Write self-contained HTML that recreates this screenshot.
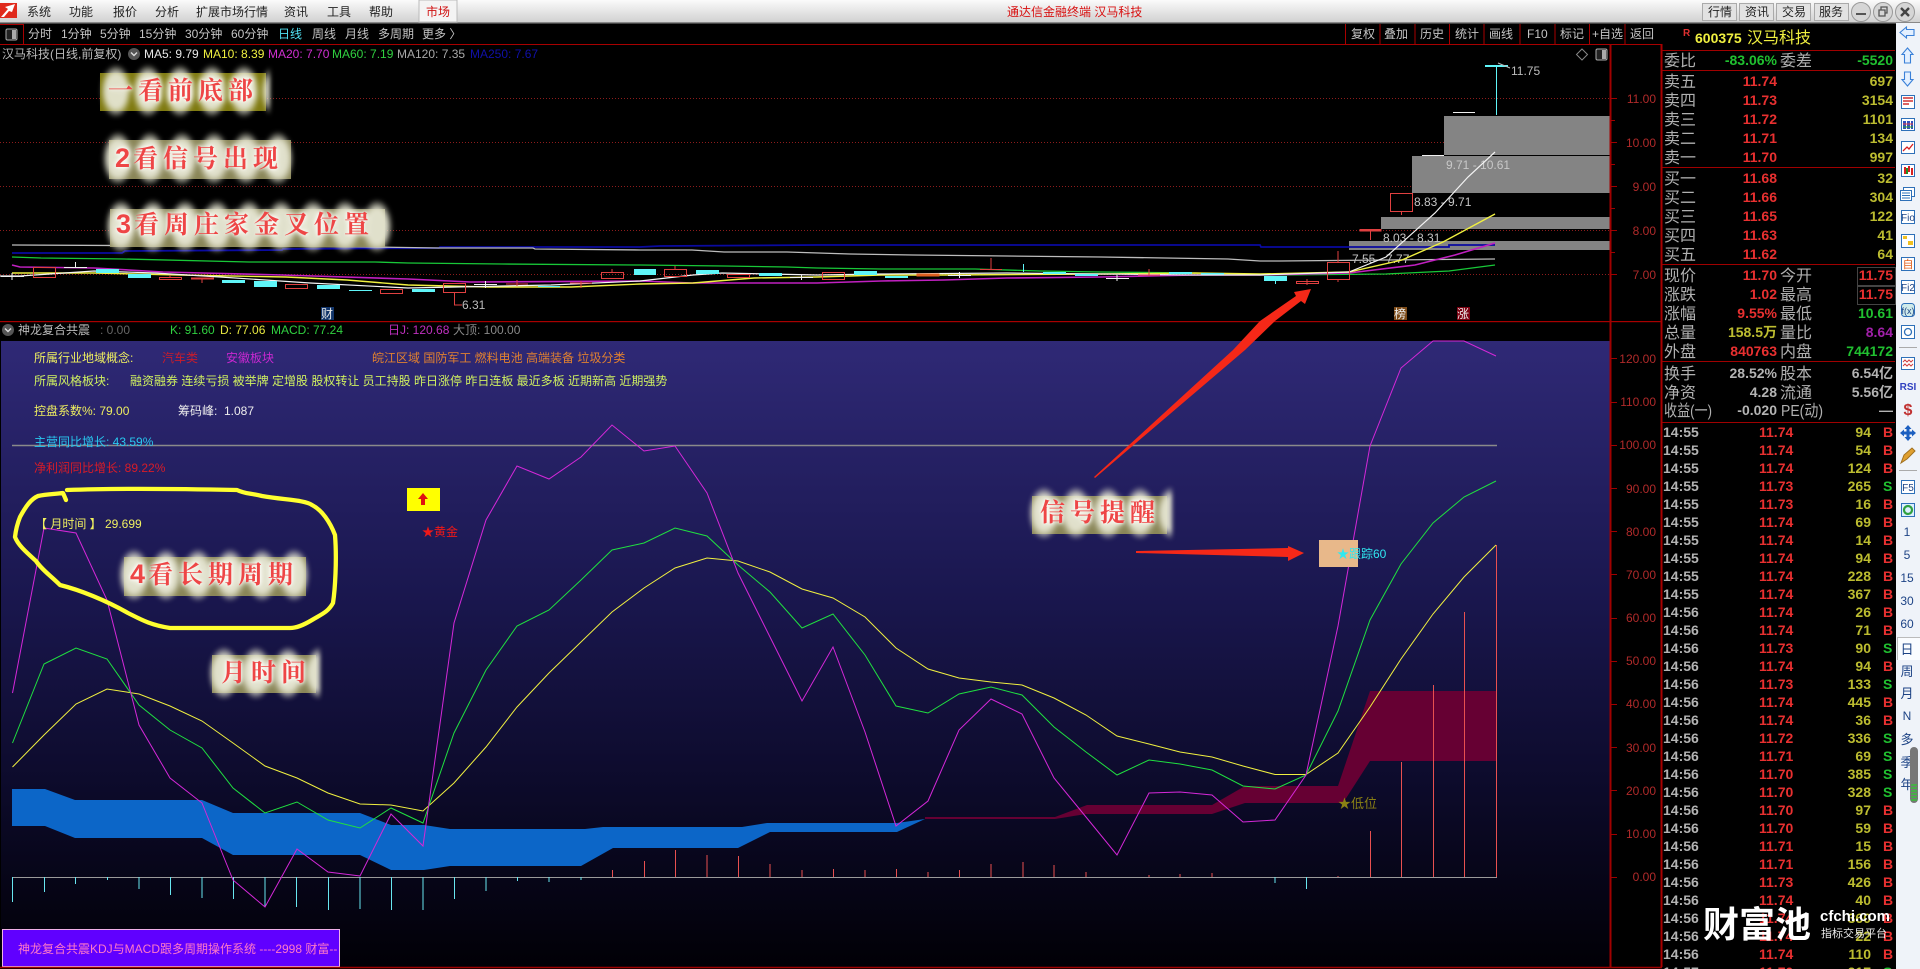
<!DOCTYPE html>
<html lang="zh"><head><meta charset="utf-8"><title>通达信金融终端 汉马科技</title>
<style>
html,body{margin:0;padding:0;background:#000;width:1920px;height:969px;overflow:hidden}
svg{position:absolute;left:0;top:0;display:block}
svg text{font-family:"Liberation Sans","Noto Sans CJK SC",sans-serif;font-size:12px;white-space:pre}
.m{fill:#222}.tb{fill:#c4c4c4}.b{font-size:14px!important;font-weight:bold}
.l{font-size:16px!important;fill:#b0b0b0}.r{fill:#e83030}.y{fill:#bcbc30}.g{fill:#20c030}.w{fill:#b4b4b4}
.e{text-anchor:end}.ax{fill:#b02a2a;text-anchor:end}.s{fill:#1d4385;text-anchor:middle}
.bx{position:absolute;background:#8a8658}
.hl{position:absolute;background:radial-gradient(ellipse closest-side,rgba(228,228,208,.96) 62%,rgba(228,228,208,0) 100%) 0 0/32px 100% repeat-x;filter:blur(2px)}
.gl{position:absolute;height:30px;line-height:30px;white-space:nowrap;font-family:"Noto Serif CJK SC","Liberation Serif",serif;font-size:25px;font-weight:700;letter-spacing:5px;color:#ee4646;text-shadow:0 0 3px #fff,0 0 6px #fff,0 0 9px #fffff0}
.gl span{font-family:"Liberation Sans",sans-serif;font-size:27px;letter-spacing:3px}
</style></head><body>
<svg width="1920" height="969" viewBox="0 0 1920 969" xmlns="http://www.w3.org/2000/svg">
<defs>
<linearGradient id="tg" x1="0" y1="0" x2="0" y2="1"><stop offset="0" stop-color="#fbfbfb"/><stop offset="1" stop-color="#cfcfcf"/></linearGradient>
<linearGradient id="pg" x1="0" y1="0" x2="0" y2="1"><stop offset="0" stop-color="#2f2976"/><stop offset=".4" stop-color="#1a174f"/><stop offset=".7" stop-color="#0d0b2c"/><stop offset="1" stop-color="#010006"/></linearGradient>
</defs>
<rect width="1920" height="969" fill="#000"/>
<!-- title bar -->
<rect width="1920" height="23" fill="url(#tg)"/><rect y="22" width="1920" height="1.5" fill="#888"/>
<rect x="0" y="3" width="17" height="15" fill="#e02a1c"/><path d="M1 17 L8 9 L5 7 L15 4 L12 12 L9 11 L4 17Z" fill="#fff"/>
<g class="m">
<text x="27" y="16" class="m">系统</text><text x="69" y="16" class="m">功能</text><text x="113" y="16" class="m">报价</text><text x="155" y="16" class="m">分析</text><text x="196" y="16" class="m">扩展市场行情</text><text x="284" y="16" class="m">资讯</text><text x="327" y="16" class="m">工具</text><text x="369" y="16" class="m">帮助</text>
</g>
<rect x="419" y="0" width="38" height="22" fill="#f4f4f4" stroke="#bbb"/><text x="426" y="16" fill="#d01010">市场</text>
<text x="1007" y="16" fill="#d81010">通达信金融终端 汉马科技</text>
<g fill="#e2e2e2" stroke="#aaa"><rect x="1702.5" y="3.5" width="34" height="17"/><rect x="1739.5" y="3.5" width="34" height="17"/><rect x="1776.5" y="3.5" width="34" height="17"/><rect x="1814.5" y="3.5" width="34" height="17"/></g>
<text x="1708" y="16" class="m">行情</text><text x="1745" y="16" class="m">资讯</text><text x="1782" y="16" class="m">交易</text><text x="1819" y="16" class="m">服务</text>
<g fill="#d6d6d6" stroke="#999"><circle cx="1861" cy="12" r="9.5"/><circle cx="1883" cy="12" r="9.5"/><circle cx="1905" cy="12" r="9.5"/></g>
<path d="M1856 14H1866" stroke="#555" stroke-width="2"/><path d="M1879 10h6v6h-6zM1881 10V7h6v6h-2" fill="none" stroke="#555" stroke-width="1.3"/><path d="M1901 8L1909 16M1909 8L1901 16" stroke="#444" stroke-width="2.4"/>
<!-- toolbar -->
<rect x="0" y="44" width="1662" height="1" fill="#a80000"/>
<path d="M0 24.5H23.5V44" fill="none" stroke="#a80000"/>
<rect x="6" y="29" width="11" height="11" rx="1.5" fill="#222" stroke="#aaa"/><rect x="12" y="30" width="4" height="9" fill="#aaa"/>
<g class="tb">
<text x="28" y="38" class="tb">分时</text><text x="61" y="38" class="tb">1分钟</text><text x="100" y="38" class="tb">5分钟</text><text x="139" y="38" class="tb">15分钟</text><text x="185" y="38" class="tb">30分钟</text><text x="231" y="38" class="tb">60分钟</text><text x="278" y="38" fill="#50e0f0">日线</text><text x="312" y="38" class="tb">周线</text><text x="345" y="38" class="tb">月线</text><text x="378" y="38" class="tb">多周期</text><text x="422" y="38" class="tb">更多 〉</text>
<text x="1351" y="38" class="tb">复权</text><text x="1384" y="38" class="tb">叠加</text><text x="1420" y="38" class="tb">历史</text><text x="1455" y="38" class="tb">统计</text><text x="1489" y="38" class="tb">画线</text><text x="1527" y="38" class="tb">F10</text><text x="1560" y="38" class="tb">标记</text><text x="1592" y="38" class="tb">+自选</text><text x="1630" y="38" class="tb">返回</text>
</g>
<path d="M1345.5 24V44M1380 24V44M1415 24V44M1449.5 24V44M1484 24V44M1520 24V44M1555 24V44M1589.5 24V44M1625 24V44" stroke="#a80000"/>
<!-- info row -->
<text x="2" y="58" fill="#bbb">汉马科技(日线,前复权)</text>
<circle cx="134" cy="54" r="6" fill="#555"/><path d="M131 52.5l3 3 3-3" fill="none" stroke="#ddd" stroke-width="1.4"/>
<text x="144" y="58" fill="#e8e8e8">MA5: 9.79</text><text x="203" y="58" fill="#f0f040">MA10: 8.39</text><text x="268" y="58" fill="#d030d0">MA20: 7.70</text><text x="332" y="58" fill="#30d040">MA60: 7.19</text><text x="397" y="58" fill="#a8a8a8">MA120: 7.35</text><text x="470" y="58" fill="#1010a8">MA250: 7.67</text>
<path d="M1582 49l5.500 5.500-5.500 5.500-5.500-5.500z" fill="none" stroke="#888"/><rect x="1596" y="49" width="11" height="11" rx="1.500" fill="#222" stroke="#aaa"/><rect x="1602" y="50" width="4" height="9" fill="#aaa"/>
<!-- main chart grid -->
<g stroke="#8e1c1c" stroke-dasharray="1 2"><path d="M0 98.500H1610M0 142.500H1610M0 186.500H1610M0 230.500H1610M0 274.500H1610"/></g>
<!-- gray zones -->
<g fill="#848484"><rect x="1444" y="116" width="166" height="39"/><rect x="1412" y="156" width="198" height="37"/><rect x="1381" y="217" width="229" height="12"/><rect x="1349" y="241" width="261" height="9"/></g>
<rect x="1422" y="155" width="22" height="1" fill="#fff"/>
<text x="1446" y="169" fill="#c8c8c8">9.71 - 10.61</text><text x="1414" y="206" fill="#c4c4c4">8.83 - 9.71</text><text x="1383" y="242" fill="#c4c4c4">8.03 - 8.31</text><text x="1352" y="263" fill="#c4c4c4">7.55 - 7.77</text>
<!-- MA lines -->
<g fill="none" stroke-width="1.300">
<polyline stroke="#0a0aa0" stroke-width="1.800" points="12,253 122,253 125,251 282,250 283,249 439,248 440,247 640,247 660,246 817,245 1102,245 1260,245 1261,247 1449,247 1449,245 1495,245"/>
<polyline stroke="#bcbcbc" points="12,245 218,246 375,247 439,248 533,248 535,249 640,250 692,250 724,252 787,252 850,254 913,255 1007,256 1101,257 1165,258 1228,259 1260,261 1280,261 1495,259"/>
<polyline stroke="#18c838" points="12,257 41,258 124,259 249,262 375,262 408,263 502,264 640,265 724,266 787,267 817,268 881,269 975,269 1040,271 1101,272 1195,273 1260,275 1280,275 1386,274 1449,271 1495,265"/>
<polyline stroke="#c020c0" stroke-width="1.600" points="12,265 20,267 94,268 163,272 282,275 408,279 470,282 640,281 692,283 817,283 881,281 944,280 1007,278 1101,277 1195,275 1260,275 1349,273 1415,265 1455,255 1495,243"/>
<polyline stroke="#f0f040" stroke-width="1.400" points="12,273 94,273 180,275 286,277 347,280 408,285 490,287 571,287 640,284 693,283 754,278 817,277 881,275 944,275 1101,274 1195,273 1260,274 1349,272 1402,260 1443,242 1495,214"/>
<polyline stroke="#f4f4f4" stroke-width="1.200" points="0,276 20,276 94,271 155,273 220,277 310,283 408,288 551,285 640,281 693,275 722,273 817,275 881,274 1007,273 1195,275 1260,275 1349,272 1386,257 1435,213 1468,177 1495,152"/>
</g>
<!-- candles -->
<g fill="none" stroke="#e04040">
<rect x="33.500" y="267.500" width="22" height="10"/><rect x="159.500" y="277.500" width="22" height="2"/><rect x="191.500" y="278" width="22" height="1" fill="#e04040"/><path d="M202 279V283M170 275V277"/>
<rect x="285.500" y="284.500" width="22" height="4"/><rect x="380.500" y="289.500" width="22" height="4"/><rect x="443.500" y="283.500" width="22" height="9"/><path d="M454.500 292V305H462"/>
<path d="M506 284H528M517 280V286M570 283H592M581 281V288"/><rect x="601.500" y="272.500" width="22" height="6"/><path d="M612 269V272"/>
<rect x="664.500" y="269.500" width="22" height="7"/><path d="M675 266V270"/><rect x="727.500" y="274.500" width="22" height="3"/><rect x="822.500" y="272.500" width="22" height="7"/>
<rect x="917" y="274" width="22" height="2" fill="#e06020" stroke="#e06020"/><path d="M980 269.500H1002M991 258V270M1149 269V276M1138 275H1160"/>
<rect x="1296.500" y="281.500" width="22" height="2"/><path d="M1307 279V285"/><rect x="1327.500" y="262.500" width="22" height="17"/><path d="M1338 251V262M1338 279V282"/>
<rect x="1360" y="229.500" width="21" height="1.500" fill="#e04040"/><path d="M1370.500 231V240"/><rect x="1390.500" y="193.500" width="22" height="18"/><path d="M1401.500 211V215"/>
</g>
<g fill="#5ff5f8">
<rect x="96" y="269" width="23" height="4"/><rect x="128" y="274" width="23" height="4"/><rect x="222" y="280" width="23" height="3"/><rect x="254" y="281" width="23" height="6"/><rect x="317" y="285" width="23" height="4"/><rect x="349" y="290" width="23" height="1"/><rect x="412" y="289" width="23" height="3"/><rect x="538" y="286" width="22" height="1"/><rect x="634" y="269" width="22" height="6"/><rect x="696" y="270" width="23" height="4"/><rect x="759" y="273" width="23" height="3"/><rect x="854" y="271" width="23" height="4"/><rect x="885" y="276" width="23" height="2"/><rect x="1043" y="272" width="23" height="2"/><rect x="1075" y="274" width="23" height="2"/><rect x="1169" y="272" width="23" height="2"/><rect x="1201" y="273" width="23" height="1.500"/><rect x="1264" y="276" width="23" height="5"/><rect x="1485" y="65" width="23" height="2"/>
<rect x="1275" y="281" width="1" height="3"/><rect x="1496" y="66" width="1" height="49"/><rect x="1023" y="264" width="1" height="8"/>
</g>
<g stroke="#f0f0f0"><path d="M1 276.500H24M12 273V280M64 267.500H87M75.500 262V267M474 284.500H497M485.500 281V288M790 277.500H813M801.500 275V280M948 275.500H971M959.500 272V278M1106 278.500H1129M1117 275V281M1422 155.500H1444M1453 112.500H1475"/></g>
<text x="1511" y="75" fill="#bcbcbc">11.75</text><path d="M1498 63L1510 68" stroke="#bbb"/>
<text x="462" y="309" fill="#bcbcbc">6.31</text>
<rect x="321" y="307" width="13" height="13" fill="#12356a"/><text x="321" y="318" fill="#e8e8e8">财</text>
<rect x="1394" y="307" width="13" height="13" fill="#7d4c1a"/><text x="1394" y="318" fill="#eee">榜</text>
<rect x="1457" y="307" width="13" height="13" fill="#7a0010"/><text x="1457" y="318" fill="#eee">涨</text>
<!-- lower header -->
<rect y="321" width="1662" height="1.200" fill="#a80000"/>
<circle cx="8" cy="330" r="6" fill="#555"/><path d="M5 328.500l3 3 3-3" fill="none" stroke="#ddd" stroke-width="1.400"/>
<text x="18" y="334" fill="#bbb">神龙复合共震</text><text x="100" y="334" fill="#666">: 0.00</text>
<text x="170" y="334" fill="#30d040">K: 91.60</text><text x="220" y="334" fill="#e8e840">D: 77.06</text><text x="271" y="334" fill="#30d040">MACD: 77.24</text><text x="388" y="334" fill="#c030c0">日J: 120.68</text><text x="453" y="334" fill="#888">大顶: 100.00</text>
<!-- lower panel -->
<rect x="1" y="341" width="1609" height="626" fill="url(#pg)"/>
<path d="M12 445.500H1497" stroke="#8a8a8a" stroke-width="1.500"/>
<path d="M12 877.500H1497" stroke="#9a9a9a"/>
<polygon fill="#0c66c8" points="12,789 45,789 75,800 202,800 233,813 360,813 391,825 424,825 450,829 585,829 603,827 742,827 767,823 897,823 925,819 897,832 770,832 738,848 613,848 581,866 450,866 424,870 391,870 360,855 233,855 202,838 75,838 45,826 12,826"/>
<polygon fill="#660033" points="925,817 1055,817 1087,805 1212,805 1245,786 1338,786 1370,691 1496,691 1496,761 1370,761 1343,803 1245,803 1212,814 1086,814 1055,819 925,819"/>
<g fill="none" stroke="#68e6f0"><path d="M12.500 877V902M44.500 877V892M75.500 877V884M107.500 877V880M139 877V889M170.500 877V895M202 877V898M233.500 877V899M265 877V907M296.500 877V907M328.500 877V910M360 877V909M391.500 877V910M423 877V910M454.500 877V899M486 877V891M517.500 877V881M549 877V882M581 877V880M1275 877V883M1306.500 877V889"/></g>
<g fill="none" stroke="#e85050"><path d="M612.500 877V870M644.500 877V861M675.500 877V850M707 877V855M738.500 877V856M770 877V864M802 877V870M833.500 877V869M865 877V870M896.500 877V869M928 877V872M959.500 877V870M991 877V864M1023 877V862M1054 877V865M1086 877V872M1149 877V875M1180 877V874M1212 877V873M1338 877V876M1370.500 877V831M1401.500 877V762M1433.500 877V685M1464.500 877V612M1496.500 877V545"/></g>
<polyline fill="none" stroke="#f0f040" points="12.500,767 44,735 76,704 107,689 139,694 170,706 202,721 233,743 265,766 297,778 328,793 360,804 391,805 423,811 454,783 486,747 517,707 549,673 581,642 612,612 644,588 675,568 707,558 738,561 770,572 802,589 833,598 865,617 896,648 928,669 959,678 991,682 1022,685 1054,698 1086,715 1117,736 1149,744 1180,752 1212,757 1243,766 1275,774.500 1306,774.500 1338,753 1370,707 1401,659 1433,614 1464,577 1496,545"/>
<polyline fill="none" stroke="#20e040" points="12.500,743 44,664 76,648 107,659 139,705 170,730 202,748 233,788 265,813 297,802 328,820 360,828 391,808 423,823 454,733 486,670 517,626 549,610 581,580 612,550 644,543 675,528 707,536 738,565 770,592 802,628 833,614 865,655 896,706 928,713 959,694 991,687 1022,695 1054,727 1086,752 1117,775 1149,760 1180,764 1212,770 1243,786 1275,789 1306,775 1338,711 1370,620 1401,564 1433,523 1464,497 1496,481"/>
<polyline fill="none" stroke="#d428d8" points="12.500,693 44,528 76,533 107,600 139,725 170,778 202,803 233,880 265,907 297,849 328,872 360,876 391,814 423,846 454,623 486,520 517,466 549,479 581,457 612,425 644,451 675,446 707,493 738,573 770,637 802,701 833,647 865,732 896,826 928,801 959,730 991,699 1022,714 1054,778 1086,817 1117,855 1149,793 1180,792 1212,795 1243,822 1275,820 1306,775 1338,626 1370,446 1401,368 1433,341 1464,341 1496,356"/>
<!-- panel text -->
<text x="34" y="362" fill="#eeee60">所属行业地域概念:</text><text x="162" y="362" fill="#c81c2c">汽车类</text><text x="226" y="362" fill="#c828d0">安徽板块</text><text x="372" y="362" fill="#e08030">皖江区域 国防军工 燃料电池 高端装备 垃圾分类</text>
<text x="34" y="385" fill="#cff060">所属风格板块:</text><text x="130" y="385" fill="#cff060">融资融券 连续亏损 被举牌 定增股 股权转让 员工持股 昨日涨停 昨日连板 最近多板 近期新高 近期强势</text>
<text x="34" y="415" fill="#eeee60">控盘系数%: 79.00</text><text x="178" y="415" fill="#eee">筹码峰:  1.087</text>
<text x="34" y="446" fill="#28c8f0">主营同比增长: 43.59%</text><text x="34" y="472" fill="#d81c28">净利润同比增长: 89.22%</text>
<text x="35" y="528" fill="#f0f060">【 月时间 】 29.699</text>
<rect x="407" y="488" width="33" height="23" fill="#ffff00"/><path d="M423 493l5 6h-3v6h-4v-6h-3z" fill="#e01010"/>
<text x="422" y="536" fill="#f01818">★黄金</text>
<rect x="1319" y="540" width="39" height="27" fill="#e8b88a"/>
<text x="1337" y="558" fill="#30e8f0">★跟踪60</text>
<text x="1338" y="808" fill="#8a8014" style="font-size:13px">★低位</text>
<!-- bottom-left banner -->
<rect x="2.500" y="929.500" width="337" height="37" fill="#6000ff" stroke="#f0b0e8"/>
<text x="18" y="953" fill="#ff78c8">神龙复合共震KDJ与MACD跟多周期操作系统 ----2998 财富--</text>
<!-- axis -->
<path d="M1610.500 44V967" stroke="#a00000" stroke-width="2"/>
<g stroke="#a00000"><path d="M1611 98.500H1617M1611 120.500H1615M1611 142.500H1617M1611 164.500H1615M1611 186.500H1617M1611 208.500H1615M1611 230.500H1617M1611 252.500H1615M1611 274.500H1617M1611 358.500H1617M1611 402.500H1617M1611 445.500H1617M1611 488.500H1617M1611 531.500H1617M1611 574.500H1617M1611 618.500H1617M1611 661.500H1617M1611 704.500H1617M1611 747.500H1617M1611 790.500H1617M1611 834.500H1617M1611 877.500H1617"/></g>
<g class="ax"><text x="1656" y="103" class="ax">11.00</text><text x="1656" y="147" class="ax">10.00</text><text x="1656" y="191" class="ax">9.00</text><text x="1656" y="235" class="ax">8.00</text><text x="1656" y="279" class="ax">7.00</text>
<text x="1656" y="363" class="ax">120.00</text><text x="1656" y="406" class="ax">110.00</text><text x="1656" y="449" class="ax">100.00</text><text x="1656" y="493" class="ax">90.00</text><text x="1656" y="536" class="ax">80.00</text><text x="1656" y="579" class="ax">70.00</text><text x="1656" y="622" class="ax">60.00</text><text x="1656" y="665" class="ax">50.00</text><text x="1656" y="708" class="ax">40.00</text><text x="1656" y="752" class="ax">30.00</text><text x="1656" y="795" class="ax">20.00</text><text x="1656" y="838" class="ax">10.00</text><text x="1656" y="881" class="ax">0.00</text></g>
<path d="M0 967.500H1662" stroke="#a00000" stroke-width="1.500"/>
<!-- right panel -->
<path d="M1661.500 44V967" stroke="#a80000" stroke-width="2"/>
<g stroke="#a00000"><path d="M1662 50.500H1895M1662 70.500H1895M1662 167.500H1895M1662 264.500H1895M1662 361.500H1895M1662 422.500H1895"/></g>
<text x="1683" y="36" fill="#e03030" style="font-size:10px;font-weight:bold">R</text>
<text x="1695" y="43" fill="#f0f040" class="b">600375</text><text x="1747" y="43" fill="#f0f040" style="font-size:16px">汉马科技</text>
<text x="1664" y="66" class="l">委比</text><text x="1777" y="65" class="b g e">-83.06%</text><text x="1780" y="66" class="l">委差</text><text x="1893" y="65" class="b g e">-5520</text>
<text x="1664" y="87" class="l">卖五</text><text x="1777" y="86" class="b r e">11.74</text><text x="1893" y="86" class="b y e">697</text>
<text x="1664" y="106" class="l">卖四</text><text x="1777" y="105" class="b r e">11.73</text><text x="1893" y="105" class="b y e">3154</text>
<text x="1664" y="125" class="l">卖三</text><text x="1777" y="124" class="b r e">11.72</text><text x="1893" y="124" class="b y e">1101</text>
<text x="1664" y="144" class="l">卖二</text><text x="1777" y="143" class="b r e">11.71</text><text x="1893" y="143" class="b y e">134</text>
<text x="1664" y="163" class="l">卖一</text><text x="1777" y="162" class="b r e">11.70</text><text x="1893" y="162" class="b y e">997</text>
<text x="1664" y="184" class="l">买一</text><text x="1777" y="183" class="b r e">11.68</text><text x="1893" y="183" class="b y e">32</text>
<text x="1664" y="203" class="l">买二</text><text x="1777" y="202" class="b r e">11.66</text><text x="1893" y="202" class="b y e">304</text>
<text x="1664" y="222" class="l">买三</text><text x="1777" y="221" class="b r e">11.65</text><text x="1893" y="221" class="b y e">122</text>
<text x="1664" y="241" class="l">买四</text><text x="1777" y="240" class="b r e">11.63</text><text x="1893" y="240" class="b y e">41</text>
<text x="1664" y="260" class="l">买五</text><text x="1777" y="259" class="b r e">11.62</text><text x="1893" y="259" class="b y e">64</text>
<rect x="1857.500" y="267.500" width="38" height="18" fill="none" stroke="#444"/><rect x="1857.500" y="286.500" width="38" height="18" fill="none" stroke="#444"/>
<text x="1664" y="281" class="l">现价</text><text x="1777" y="280" class="b r e">11.70</text><text x="1780" y="281" class="l">今开</text><text x="1893" y="280" class="b r e">11.75</text>
<text x="1664" y="300" class="l">涨跌</text><text x="1777" y="299" class="b r e">1.02</text><text x="1780" y="300" class="l">最高</text><text x="1893" y="299" class="b r e">11.75</text>
<text x="1664" y="319" class="l">涨幅</text><text x="1777" y="318" class="b r e">9.55%</text><text x="1780" y="319" class="l">最低</text><text x="1893" y="318" class="b g e">10.61</text>
<text x="1664" y="338" class="l">总量</text><text x="1777" y="337" class="b y e">158.5万</text><text x="1780" y="338" class="l">量比</text><text x="1893" y="337" fill="#a020a8" class="b e">8.64</text>
<text x="1664" y="357" class="l">外盘</text><text x="1777" y="356" class="b r e">840763</text><text x="1780" y="357" class="l">内盘</text><text x="1893" y="356" class="b g e">744172</text>
<text x="1664" y="379" class="l">换手</text><text x="1777" y="378" class="b w e">28.52%</text><text x="1780" y="379" class="l">股本</text><text x="1893" y="378" class="b w e">6.54亿</text>
<text x="1664" y="398" class="l">净资</text><text x="1777" y="397" class="b w e">4.28</text><text x="1780" y="398" class="l">流通</text><text x="1893" y="397" class="b w e">5.56亿</text>
<text x="1664" y="416" class="l" textLength="48" lengthAdjust="spacingAndGlyphs">收益(一)</text><text x="1777" y="415" class="b w e">-0.020</text><text x="1781" y="416" class="l" textLength="42" lengthAdjust="spacingAndGlyphs">PE(动)</text><text x="1893" y="415" class="b w e">—</text>
<!-- ticks -->
<g class="b">
<text x="1663" y="437" class="b w">14:55</text><text x="1759" y="437" class="b r">11.74</text><text x="1871" y="437" class="b y e">94</text><text x="1883" y="437" class="b r">B</text>
<text x="1663" y="455" class="b w">14:55</text><text x="1759" y="455" class="b r">11.74</text><text x="1871" y="455" class="b y e">54</text><text x="1883" y="455" class="b r">B</text>
<text x="1663" y="473" class="b w">14:55</text><text x="1759" y="473" class="b r">11.74</text><text x="1871" y="473" class="b y e">124</text><text x="1883" y="473" class="b r">B</text>
<text x="1663" y="491" class="b w">14:55</text><text x="1759" y="491" class="b r">11.73</text><text x="1871" y="491" class="b y e">265</text><text x="1883" y="491" class="b g">S</text>
<text x="1663" y="509" class="b w">14:55</text><text x="1759" y="509" class="b r">11.73</text><text x="1871" y="509" class="b y e">16</text><text x="1883" y="509" class="b r">B</text>
<text x="1663" y="527" class="b w">14:55</text><text x="1759" y="527" class="b r">11.74</text><text x="1871" y="527" class="b y e">69</text><text x="1883" y="527" class="b r">B</text>
<text x="1663" y="545" class="b w">14:55</text><text x="1759" y="545" class="b r">11.74</text><text x="1871" y="545" class="b y e">14</text><text x="1883" y="545" class="b r">B</text>
<text x="1663" y="563" class="b w">14:55</text><text x="1759" y="563" class="b r">11.74</text><text x="1871" y="563" class="b y e">94</text><text x="1883" y="563" class="b r">B</text>
<text x="1663" y="581" class="b w">14:55</text><text x="1759" y="581" class="b r">11.74</text><text x="1871" y="581" class="b y e">228</text><text x="1883" y="581" class="b r">B</text>
<text x="1663" y="599" class="b w">14:55</text><text x="1759" y="599" class="b r">11.74</text><text x="1871" y="599" class="b y e">367</text><text x="1883" y="599" class="b r">B</text>
<text x="1663" y="617" class="b w">14:56</text><text x="1759" y="617" class="b r">11.74</text><text x="1871" y="617" class="b y e">26</text><text x="1883" y="617" class="b r">B</text>
<text x="1663" y="635" class="b w">14:56</text><text x="1759" y="635" class="b r">11.74</text><text x="1871" y="635" class="b y e">71</text><text x="1883" y="635" class="b r">B</text>
<text x="1663" y="653" class="b w">14:56</text><text x="1759" y="653" class="b r">11.73</text><text x="1871" y="653" class="b y e">90</text><text x="1883" y="653" class="b g">S</text>
<text x="1663" y="671" class="b w">14:56</text><text x="1759" y="671" class="b r">11.74</text><text x="1871" y="671" class="b y e">94</text><text x="1883" y="671" class="b r">B</text>
<text x="1663" y="689" class="b w">14:56</text><text x="1759" y="689" class="b r">11.73</text><text x="1871" y="689" class="b y e">133</text><text x="1883" y="689" class="b g">S</text>
<text x="1663" y="707" class="b w">14:56</text><text x="1759" y="707" class="b r">11.74</text><text x="1871" y="707" class="b y e">445</text><text x="1883" y="707" class="b r">B</text>
<text x="1663" y="725" class="b w">14:56</text><text x="1759" y="725" class="b r">11.74</text><text x="1871" y="725" class="b y e">36</text><text x="1883" y="725" class="b r">B</text>
<text x="1663" y="743" class="b w">14:56</text><text x="1759" y="743" class="b r">11.72</text><text x="1871" y="743" class="b y e">336</text><text x="1883" y="743" class="b g">S</text>
<text x="1663" y="761" class="b w">14:56</text><text x="1759" y="761" class="b r">11.71</text><text x="1871" y="761" class="b y e">69</text><text x="1883" y="761" class="b g">S</text>
<text x="1663" y="779" class="b w">14:56</text><text x="1759" y="779" class="b r">11.70</text><text x="1871" y="779" class="b y e">385</text><text x="1883" y="779" class="b g">S</text>
<text x="1663" y="797" class="b w">14:56</text><text x="1759" y="797" class="b r">11.70</text><text x="1871" y="797" class="b y e">328</text><text x="1883" y="797" class="b g">S</text>
<text x="1663" y="815" class="b w">14:56</text><text x="1759" y="815" class="b r">11.70</text><text x="1871" y="815" class="b y e">97</text><text x="1883" y="815" class="b r">B</text>
<text x="1663" y="833" class="b w">14:56</text><text x="1759" y="833" class="b r">11.70</text><text x="1871" y="833" class="b y e">59</text><text x="1883" y="833" class="b r">B</text>
<text x="1663" y="851" class="b w">14:56</text><text x="1759" y="851" class="b r">11.71</text><text x="1871" y="851" class="b y e">15</text><text x="1883" y="851" class="b r">B</text>
<text x="1663" y="869" class="b w">14:56</text><text x="1759" y="869" class="b r">11.71</text><text x="1871" y="869" class="b y e">156</text><text x="1883" y="869" class="b r">B</text>
<text x="1663" y="887" class="b w">14:56</text><text x="1759" y="887" class="b r">11.73</text><text x="1871" y="887" class="b y e">426</text><text x="1883" y="887" class="b r">B</text>
<text x="1663" y="905" class="b w">14:56</text><text x="1759" y="905" class="b r">11.74</text><text x="1871" y="905" class="b y e">40</text><text x="1883" y="905" class="b r">B</text>
<text x="1663" y="923" class="b w">14:56</text><text x="1759" y="923" class="b r">11.74</text><text x="1871" y="923" class="b y e">360</text><text x="1883" y="923" class="b r">B</text>
<text x="1663" y="941" class="b w">14:56</text><text x="1759" y="941" class="b r">11.74</text><text x="1871" y="941" class="b y e">22</text><text x="1883" y="941" class="b r">B</text>
<text x="1663" y="959" class="b w">14:56</text><text x="1759" y="959" class="b r">11.74</text><text x="1871" y="959" class="b y e">110</text><text x="1883" y="959" class="b r">B</text>
<text x="1663" y="977" class="b w">14:57</text><text x="1759" y="977" class="b r">11.70</text><text x="1871" y="977" class="b y e">217</text><text x="1883" y="977" class="b g">S</text>
</g>
<!-- watermark -->
<text x="1703" y="937" fill="#fff" style="font-size:36px;font-weight:bold">财富池</text>
<text x="1820" y="921" fill="#fff" style="font-size:15px;font-weight:bold">cfchi.com</text>
<text x="1821" y="937" fill="#e8e8e8" style="font-size:11px">指标交易平台</text>
<!-- sidebar -->
<rect x="1896" y="23" width="24" height="946" fill="#eff3f9"/>
<g fill="#e4f0ff" stroke="#3a80d8" stroke-width="1.100">
<path d="M1900 32.500L1906.500 27V29.500H1914V35.500H1906.500V38Z"/>
<path d="M1907.500 48L1913 54.500H1910.500V63H1904.500V54.500H1902Z"/>
<path d="M1907.500 86L1913 79.500H1910.500V72H1904.500V79.500H1902Z"/>
</g>
<g fill="#fff" stroke="#2e70b8"><rect x="1901.500" y="95.500" width="13" height="13"/><rect x="1901.500" y="118.500" width="13" height="12"/><rect x="1901.500" y="141.500" width="13" height="12"/><rect x="1901.500" y="164.500" width="13" height="12"/><rect x="1903.500" y="187.500" width="11" height="9"/><rect x="1900.500" y="190.500" width="11" height="10"/><rect x="1901.500" y="210.500" width="13" height="13"/><rect x="1901.500" y="234.500" width="13" height="13"/><rect x="1901.500" y="257.500" width="13" height="13"/><rect x="1901.500" y="280.500" width="13" height="13"/><rect x="1901.500" y="303.500" width="13" height="13" rx="3" fill="#cfeaea"/><rect x="1901.500" y="325.500" width="13" height="13"/></g>
<path d="M1903 98h10M1903 101h10M1903 104h6" stroke="#d03030" stroke-width="1.500"/>
<path d="M1903 121h3v8h-3zM1907 121h3v8h-3zM1911 121h2v8h-2z" fill="#3050c0"/><path d="M1903 124h10" stroke="#e04040"/><path d="M1903 127h10" stroke="#30a030"/>
<path d="M1903 151L1907 147L1909 149L1913 144" fill="none" stroke="#d82020" stroke-width="1.300"/>
<path d="M1905 167V174M1909 166V172M1912 168V175" stroke="#d82020" stroke-width="2"/><path d="M1907 168V174" stroke="#209020" stroke-width="2"/>
<path d="M1902 193h8M1902 195.500h8M1902 198h8" stroke="#2e70b8"/>
<text x="1908" y="221" class="s" style="font-size:10px;fill:#1d4385">Fio</text>
<rect x="1903" y="236" width="4" height="3" fill="#f0c020"/><rect x="1908" y="241" width="5" height="4" fill="#f0c020"/>
<text x="1908" y="268" class="s" style="font-size:11px;fill:#e06020">自</text>
<text x="1908" y="291" class="s" style="font-size:10px;fill:#1d4385">Fi2</text>
<text x="1908" y="314" class="s" style="font-size:9px;fill:#1d4385">f(x)</text>
<circle cx="1908" cy="332" r="3.500" fill="none" stroke="#2e70b8" stroke-width="1.300"/>
<path d="M1899 347.500H1917M1899 470.500H1917" stroke="#aaa"/>
<rect x="1901.500" y="357.500" width="13" height="12" fill="#fff" stroke="#2e70b8"/><path d="M1903 362l2-2 2 2 2-2 2 2 2-2M1903 366l2-2 2 2 2-2 2 2 2-2" fill="none" stroke="#d04040"/>
<text x="1908" y="390" class="s" style="font-size:10px;font-weight:bold;fill:#3040c0">RSI</text>
<text x="1908" y="415" class="s" style="font-size:16px;font-weight:bold;fill:#c03030">$</text>
<path d="M1908 425l3.500 4h-2v2.500h2.500v-2l4 3.500-4 3.500v-2h-2.500v2.500h2l-3.500 4-3.500-4h2v-2.500h-2.500v2l-4-3.500 4-3.500v2h2.500v-2.500h-2z" fill="#1c5fc0"/>
<path d="M1901 463L1904 455L1912 448L1915 451L1907 459Z" fill="#e0a030" stroke="#a07020"/>
<rect x="1901.500" y="480.500" width="13" height="13" fill="#fff" stroke="#2e70b8"/><text x="1908" y="491" class="s" style="font-size:10px;fill:#1d4385">F5</text>
<rect x="1901.500" y="503.500" width="13" height="13" fill="#dcefff" stroke="#2e70b8"/><circle cx="1908" cy="510" r="4" fill="none" stroke="#30a040" stroke-width="2.200"/>
<text x="1907" y="536" class="s">1</text><text x="1907" y="559" class="s">5</text><text x="1907" y="582" class="s">15</text><text x="1907" y="605" class="s">30</text><text x="1907" y="628" class="s">60</text>
<path d="M1897.500 660V637.500H1920" fill="#fff" stroke="#bbb"/><rect x="1898" y="638" width="22" height="22" fill="#fafcff"/>
<text x="1907" y="654" class="s" style="font-size:13px">日</text><text x="1907" y="676" class="s" style="font-size:13px">周</text><text x="1907" y="698" class="s" style="font-size:13px">月</text><text x="1907" y="720" class="s">N</text><text x="1907" y="744" class="s" style="font-size:13px">多</text><text x="1907" y="767" class="s" style="font-size:13px">季</text><text x="1907" y="789" class="s" style="font-size:13px">年</text>
<rect x="1910" y="747" width="8" height="56" rx="4" fill="#777"/><path d="M1911 785h6M1911 788h6M1911 791h6M1911 794h6M1911 797h6M1911 800h6" stroke="#38c038" stroke-width="1.500"/>
</svg>
<div class="bx" style="left:100px;top:73px;width:166px;height:38px;background:#7f7a10"></div>
<div class="hl" style="left:100px;top:64px;width:170px;height:54px"></div>
<div class="gl" style="left:108px;top:74px">一看前底部</div>
<div class="bx" style="left:109px;top:140px;width:182px;height:39px"></div>
<div class="hl" style="left:102px;top:131px;width:192px;height:55px"></div>
<div class="gl" style="left:115px;top:142px"><span>2</span>看信号出现</div>
<div class="bx" style="left:110px;top:209px;width:275px;height:38px"></div>
<div class="hl" style="left:105px;top:199px;width:288px;height:55px"></div>
<div class="gl" style="left:116px;top:208px"><span>3</span>看周庄家金叉位置</div>
<div class="bx" style="left:124px;top:557px;width:182px;height:39px"></div>
<div class="hl" style="left:118px;top:548px;width:192px;height:54px"></div>
<div class="gl" style="left:130px;top:558px"><span>4</span>看长期周期</div>
<div class="bx" style="left:212px;top:655px;width:104px;height:38px"></div>
<div class="hl" style="left:208px;top:646px;width:112px;height:54px"></div>
<div class="gl" style="left:221px;top:656px">月时间</div>
<div class="bx" style="left:1032px;top:496px;width:135px;height:38px"></div>
<div class="hl" style="left:1028px;top:486px;width:144px;height:54px"></div>
<div class="gl" style="left:1040px;top:496px">信号提醒</div>
<svg width="1920" height="969" viewBox="0 0 1920 969" xmlns="http://www.w3.org/2000/svg">
<path d="M67 490C120 488 190 489 237 490C245 494 250 493 262 496C285 500 305 500 312 505C322 510 330 522 335 535C337 560 335 590 333 603C328 612 322 614 312 620C302 626 296 628 290 628C250 628 205 628 170 628C150 625 140 619 128 613C105 600 80 590 60 585C50 575 42 570 36 561C26 552 18 545 15 537C16 528 18 522 20 517C26 506 31 499 38 496C46 494 56 494 63 493L66 500" fill="none" stroke="#ffff30" stroke-width="4.300" stroke-linejoin="round" stroke-linecap="round"/>
<polygon fill="#f52818" points="1094,477 1233,350 1260,321 1296,296 1294,292 1311,289 1305,304 1301,301 1275,321 1245,350 1095,478"/>
<polygon fill="#f52818" points="1136,551 1288,548 1288,546 1304,553 1288,561 1288,557 1136,553"/>
</svg>
</body></html>
